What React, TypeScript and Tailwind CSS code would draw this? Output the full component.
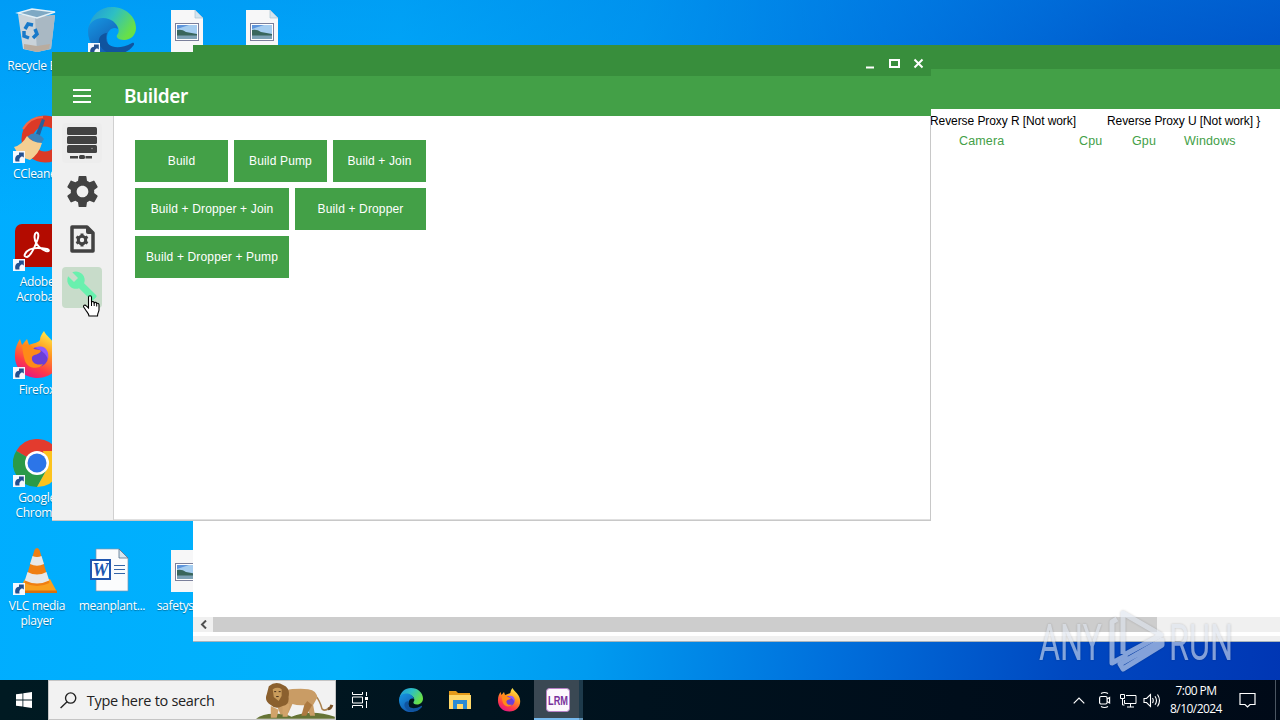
import { ReactNode } from 'react'
import { MdBuild, MdSettings } from 'react-icons/md'

interface DesktopItem {
  label: string
  icon: ReactNode
  shortcut?: boolean
}

function ShortcutArrow() {
  return (
    <g>
      <rect x="0" y="36" width="12" height="12" fill="#f4f8ff" />
      <path d="M2.500 46.500c-1-4 .5-6.500 3.500-6.700V37.500h4.800v5L9 41.200C6.500 42.500 6 44 6.500 46.500z" fill="#24508f" />
    </g>
  )
}

function RecycleBinIcon() {
  return (
    <>
      <path d="M5 7l17 3 20-2-4 34-14 3-14-3z" fill="#c9d3da" />
      <path d="M22 10l20-2-4 34-14 3z" fill="#a9b8c3" />
      <path d="M5 6l14-4 23 3-18 6z" fill="#7fa9c4" stroke="#e6f1f7" strokeWidth="1.500" />
      <path d="M11 37l13 2 13-2-1 5-12 3-13-3z" fill="#b9ac9f" />
      <g fill="none" stroke="#1879c9" strokeWidth="3.500">
        <path d="M12 22l3-5 5 1" />
        <path d="M22 22l2 5-4 4" />
        <path d="M16 31l-5-2v-5" />
      </g>
    </>
  )
}

function EdgeIcon() {
  return (
    <>
      <defs>
        <linearGradient id="edgeTop" x1="0" y1="0" x2="1" y2="0.500">
          <stop offset="0" stopColor="#1f95dc" />
          <stop offset="0.500" stopColor="#2dbfc4" />
          <stop offset="1" stopColor="#68e047" />
        </linearGradient>
        <linearGradient id="edgeSide" x1="0" y1="0" x2="0.600" y2="1">
          <stop offset="0" stopColor="#1698e4" />
          <stop offset="1" stopColor="#1358ae" />
        </linearGradient>
      </defs>
      <path d="M1 20C3 8 12 0 24 0c14 0 24 10 24 21 0 7-5 12-12 12-6 0-8-3-7-5 3-3 2-9-3-12C19 11 7 11 1 20z" fill="url(#edgeTop)" />
      <path d="M0 24c0-9 8-13 15-13 8 0 14 5 15 11-5-3-11 1-11 9 0 8 6 14 12 17C13 51 0 40 0 24z" fill="url(#edgeSide)" />
      <path d="M19 26c-5 13 9 19 25 10 2-1 3 1 1 3-7 9-20 11-28 5-9-6-8-17 2-18z" fill="#10549f" />
    </>
  )
}

function ImageFileIcon() {
  return (
    <>
      <path d="M8 3h24l8 8v34H8z" fill="#f7f7f8" />
      <path d="M32 3v8h8z" fill="#d3e4ef" stroke="#a9c3d2" strokeWidth="0.700" />
      <rect x="12.500" y="16.500" width="23" height="17" fill="#fff" stroke="#7a7f9b" />
      <rect x="14" y="18" width="20" height="14" fill="#a5cdf0" />
      <path d="M14 18h12l-12 4z" fill="#5d95dc" />
      <path d="M14 23q5-1 9 2l11 2v2H14z" fill="#39665c" />
      <path d="M14 28.500h20V32H14z" fill="#7ca1b5" />
    </>
  )
}

function CCleanerIcon() {
  return (
    <>
      <circle cx="32" cy="24" r="18" fill="none" stroke="#dc3a26" strokeWidth="11" />
      <path d="M10 14Q17 2 30 2" fill="none" stroke="#f06a4c" strokeWidth="2" />
      <path d="M29 4l3 1-6 18-4-2z" fill="#285f9a" />
      <path d="M18 19q7-2 13 5l-4 6-13-8z" fill="#3b83bd" />
      <path d="M14 21q5 7 15 7-3 11-12 17Q6 43 1 32q8-2 13-11z" fill="#f4cf93" />
    </>
  )
}

function AcrobatIcon() {
  return (
    <>
      <rect x="2" y="1" width="46" height="43" rx="7" fill="#b30b00" />
      <path
        d="M12 31c3-6 12-7 22-5 3 1 2 3-1 2-8-3-13-10-11-17 2-4 5 0 2 7-3 8-7 15-10 16-2 0-3-1-2-3z"
        fill="none"
        stroke="#fff"
        strokeWidth="2"
      />
    </>
  )
}

function FirefoxIcon() {
  return (
    <>
      <defs>
        <linearGradient id="foxBody" x1="0.800" y1="0" x2="0.300" y2="1">
          <stop offset="0" stopColor="#fff44f" />
          <stop offset="0.400" stopColor="#ff9a20" />
          <stop offset="0.750" stopColor="#ff3b47" />
          <stop offset="1" stopColor="#e31587" />
        </linearGradient>
      </defs>
      <path d="M31 0c2 5 8 8 12 15 9 16-1 32-18 32C10 47 1 36 2 23c0-6 2-10 5-15l2 6 5-6 2 6c5-2 9-2 11-5 0-4 2-6 4-9z" fill="url(#foxBody)" />
      <circle cx="25" cy="26" r="10" fill="#6b3fd6" />
      <path d="M9 15c5-3 10-1 12 3 3 1 6 0 7 2-2 4-7 3-9 6-1 6 5 9 11 7-4 6-15 5-18-3-2-6-2-10-3-15z" fill="#ff8a18" />
      <path d="M22 17c9-5 15 3 13 11-2-5-6-9-13-11z" fill="#9059ff" />
    </>
  )
}

function ChromeIcon() {
  return (
    <>
      <path d="M24 24L3.200 12A24 24 0 0 1 44.800 12z" fill="#e33b2e" />
      <path d="M3.200 12A24 24 0 0 0 24 48l10-18-10-6z" fill="#2a9a48" />
      <path d="M44.800 12A24 24 0 0 1 24 48l10-18-4-18z" fill="#fcc31e" />
      <circle cx="24" cy="24" r="12" fill="#fff" />
      <circle cx="24" cy="24" r="9.500" fill="#2c75e8" />
    </>
  )
}

function VlcIcon() {
  return (
    <>
      <path d="M12 32h25l7 13H5z" fill="#f9a01f" />
      <path d="M5 43.500h39V46H5z" fill="#d9700c" />
      <path d="M21.500 3q2.500-4 5 0l10 33q-12.500 6-25 0z" fill="#f07f12" />
      <path d="M19.500 9q4.500 2 9 0l2.500 8q-7 3.500-14 0zM14.500 25q9.500 5 19 0l2.700 8.500q-12 6-24.400 0z" fill="#e8e8e8" />
    </>
  )
}

function WordFileIcon() {
  return (
    <g transform="translate(-3 0)">
      <path d="M11 2h23l9 9v33H11z" fill="#fbfcfd" stroke="#7c93ac" strokeWidth="0.700" />
      <path d="M34 2v9h9z" fill="#d8e6ef" stroke="#56718d" strokeWidth="0.800" />
      <path d="M29 18.500h11M29 22.500h11M29 26.500h11" stroke="#3565a7" strokeWidth="1.200" />
      <rect x="5" y="12" width="21" height="21" fill="#2056b0" />
      <rect x="7" y="14" width="17" height="17" fill="#fff" />
      <text x="15.500" y="29" textAnchor="middle" fontFamily="Liberation Serif, serif" fontSize="18" fontWeight="bold" fontStyle="italic" fill="#2056b0">
        W
      </text>
    </g>
  )
}

const desktopRows: DesktopItem[][] = [
  [
    { label: 'Recycle Bin', icon: <RecycleBinIcon /> },
    { label: '', icon: <EdgeIcon />, shortcut: true },
    { label: '', icon: <ImageFileIcon /> },
    { label: '', icon: <ImageFileIcon /> }
  ],
  [{ label: 'CCleaner', icon: <CCleanerIcon />, shortcut: true }],
  [{ label: 'Adobe Acrobat', icon: <AcrobatIcon />, shortcut: true }],
  [{ label: 'Firefox', icon: <FirefoxIcon />, shortcut: true }],
  [{ label: 'Google Chrome', icon: <ChromeIcon />, shortcut: true }],
  [
    { label: 'VLC media player', icon: <VlcIcon />, shortcut: true },
    { label: 'meanplant...', icon: <WordFileIcon /> },
    { label: 'safetystar...', icon: <ImageFileIcon /> }
  ]
]

function DesktopIcons() {
  return (
    <div className="flex flex-col pt-[7px]">
      {desktopRows.map((row, i) => (
        <div key={i} className="flex h-[108px] gap-px">
          {row.map((item, j) => (
            <div key={j} className="flex w-[74px] flex-col items-center">
              <svg viewBox="0 0 48 48" className="size-12 shrink-0">
                {item.icon}
                {item.shortcut && <ShortcutArrow />}
              </svg>
              <span className="mt-[3px] px-1 text-center font-['Open_Sans',sans-serif] text-[12px] leading-[15px] tracking-[-0.3px] text-white [text-shadow:0_1px_1px_rgba(0,0,0,0.35)]">
                {item.label}
              </span>
            </div>
          ))}
        </div>
      ))}
    </div>
  )
}

function ClientWindow() {
  return (
    <div className="absolute left-[193px] top-[45px] flex h-[597px] w-[1087px] flex-col border-b border-[#a9b4bc] bg-white">
      <div className="h-6 shrink-0 bg-[#388e3c]" />
      <div className="h-10 shrink-0 bg-[#43a047]" />
      <div className="flex-1 font-['Liberation_Sans',Arial,sans-serif] text-[12px]">
        <div className="flex h-6 items-center whitespace-nowrap pl-[737px] tracking-[-0.08px] text-black">
          <span className="w-[177px]">Reverse Proxy R [Not work]</span>
          <span>Reverse Proxy U [Not work] {'}'}</span>
        </div>
        <div className="flex h-4 items-center pl-[766px] text-[12.500px] tracking-[0.15px] text-[#43a047]">
          <span className="w-[120px]">Camera</span>
          <span className="w-[53px]">Cpu</span>
          <span className="w-[52px]">Gpu</span>
          <span>Windows</span>
        </div>
      </div>
      <div className="flex h-[15px] shrink-0 bg-[#f0f0f0]">
        <div className="flex w-5 items-center justify-center pl-0.5">
          <svg viewBox="0 0 8 9" className="h-[9px] w-2">
            <path d="M6 0.500L2 4.500l4 4" fill="none" stroke="#505050" strokeWidth="2" />
          </svg>
        </div>
        <div className="w-[944px] bg-[#cdcdcd]" />
      </div>
      <div className="h-1 shrink-0 bg-white" />
      <div className="h-[5px] shrink-0 bg-[#f0f0f0]" />
    </div>
  )
}

function ServerIcon() {
  return (
    <svg viewBox="0 0 30 34" className="h-[34px] w-[30px]">
      <g fill="#424242">
        <rect x="0" y="1" width="30" height="8" rx="1.500" />
        <rect x="0" y="10" width="30" height="8" rx="1.500" />
        <rect x="0" y="19" width="30" height="8" rx="1.500" />
        <rect x="3" y="30" width="8" height="2.500" />
        <rect x="12" y="29" width="6" height="4" rx="1.500" />
        <rect x="18.500" y="30" width="6.500" height="2.500" />
      </g>
      <circle cx="25" cy="22.500" r="0.700" fill="#aaa" />
    </svg>
  )
}

function FileGearIcon() {
  return (
    <svg viewBox="0 0 25 28" className="h-7 w-[25px]">
      <path d="M2 2h15l6 6v18H2z" fill="none" stroke="#424242" strokeWidth="3.500" strokeLinejoin="round" />
      <path d="M16 1l8 8h-6q-2 0-2-2z" fill="#424242" />
      <g transform="translate(12 15)">
        <circle r="3.700" fill="none" stroke="#424242" strokeWidth="3" />
        <path d="M0-6.500v3M0 3.500v3M-5.600-3.200l2.600 1.500M3 1.700l2.600 1.500M5.600-3.200L3-1.700M-3 1.700l-2.600 1.500" stroke="#424242" strokeWidth="3" />
      </g>
    </svg>
  )
}

function BuildButton({ label, width }: { label: string; width: string }) {
  return (
    <button className={`${width} h-[42px] whitespace-nowrap bg-[#43a047] text-center text-[12px] tracking-[0.15px] text-white`}>
      {label}
    </button>
  )
}

function BuilderWindow() {
  return (
    <div className="absolute left-[52px] top-[52px] flex h-[469px] w-[879px] flex-col bg-white font-['Liberation_Sans',Arial,sans-serif]">
      <div className="flex h-6 shrink-0 items-center justify-end bg-[#388e3c] pr-1.5">
        <svg viewBox="0 0 60 12" className="h-3 w-[60px]" fill="none" stroke="#fff">
          <path d="M1 9.500h8" strokeWidth="2" />
          <rect x="25" y="2" width="9" height="7" strokeWidth="2" />
          <path d="M49.500 1.500l8 8M57.500 1.500l-8 8" strokeWidth="2" />
        </svg>
      </div>
      <div className="flex h-10 shrink-0 items-center bg-[#43a047]">
        <svg viewBox="0 0 18 14" className="ml-[21px] h-[14px] w-[18px]">
          <path d="M0 1h18M0 7h18M0 13h18" stroke="#fff" strokeWidth="2" />
        </svg>
        <h1 className="ml-[33px] font-['Noto_Sans',sans-serif] text-[19px] font-semibold leading-none tracking-[-0.4px] text-white">Builder</h1>
      </div>
      <div className="flex min-h-0 flex-1 border-b border-r border-[#c8c8c8]">
        <div className="flex w-[62px] shrink-0 flex-col items-center gap-2 border-r border-[#d0d0d0] bg-[#f0f0f0] pr-px pt-[7px]">
          <div className="flex size-10 items-center justify-center rounded bg-[#ededed]">
            <ServerIcon />
          </div>
          <div className="flex size-10 items-center justify-center">
            <MdSettings className="size-[39px] shrink-0 text-[#424242]" />
          </div>
          <div className="flex size-10 items-center justify-center">
            <FileGearIcon />
          </div>
          <div className="flex h-[41px] w-10 items-start justify-center rounded bg-[#c8dcca] pt-[3px]">
            <MdBuild className="size-8 shrink-0 text-[#69f0ae]" />
          </div>
        </div>
        <div className="flex flex-1 flex-col gap-1.5 border-b border-[#e0e0e0] pl-[21px] pt-6">
          <div className="flex gap-1.5">
            <BuildButton label="Build" width="w-[93px]" />
            <BuildButton label="Build Pump" width="w-[93px]" />
            <BuildButton label="Build + Join" width="w-[93px]" />
          </div>
          <div className="flex gap-1.5">
            <BuildButton label="Build + Dropper + Join" width="w-[154px]" />
            <BuildButton label="Build + Dropper" width="w-[131px]" />
          </div>
          <div className="flex">
            <BuildButton label="Build + Dropper + Pump" width="w-[154px]" />
          </div>
        </div>
      </div>
    </div>
  )
}

function Watermark() {
  return (
    <svg viewBox="0 0 220 80" className="absolute left-[1036px] top-[606px] h-20 w-[220px] opacity-60 drop-shadow-[0_0_1px_rgba(0,0,0,0.3)]">
      <g fill="#dde3ee" fontFamily="Roboto, sans-serif" fontSize="50">
        <text x="3" y="54" textLength="63" lengthAdjust="spacingAndGlyphs">ANY</text>
        <text x="133" y="54" textLength="64" lengthAdjust="spacingAndGlyphs">RUN</text>
      </g>
      <g fill="none" stroke="#dde3ee" strokeWidth="5" strokeLinejoin="round">
        <path d="M81 13l-5 3v41l15-8" />
        <path d="M87 48V7l38 22-37 20" />
        <path d="M84 58l42-24v5L87 63z" />
      </g>
    </svg>
  )
}

function HandCursor() {
  return (
    <svg viewBox="0 0 17 22" className="absolute left-[83px] top-[295px] h-[22px] w-[17px]">
      <path
        d="M5.500 13V2.200c0-2 3-2 3 0v5c.5-1 2.500-.8 2.700.6.700-.9 2.300-.5 2.500.7.900-.7 2.300 0 2.300 1.300v5c0 2-1.500 3-1.500 6.200h-8.500c0-2-2-4-3-5.500L.700 12c-.8-1.500 1.300-2.600 2.600-1.200z"
        fill="#fff"
        stroke="#000"
        strokeWidth="1.100"
      />
      <path d="M8.500 7v4M11.200 8v3M13.700 9v2.500" stroke="#000" />
    </svg>
  )
}

function Lion() {
  return (
    <svg viewBox="0 0 80 38" className="h-[38px] w-20">
      <path d="M0 38q8-6 22-5 9 0 14 3 20-8 44 0v2z" fill="#657335" />
      <path d="M60 14q5 6 7 14 3 3 7-1" fill="none" stroke="#a9824f" strokeWidth="1.500" />
      <path d="M73 28q3 0 4-4" fill="none" stroke="#7a5228" strokeWidth="3" />
      <path d="M28 9q14-2 25-1 9 1 9 9l-4 7 2 11h-5l-4-11q-8 1-14-1l-4 9-8 2-6-14z" fill="#c99c65" />
      <path d="M52 20l5 4-6 11h-5l3-11z" fill="#ac7940" />
      <path d="M15 25l8 4-2 8h-6zM27 23h7l-2 13h-5z" fill="#d1a36a" />
      <path d="M13 5q7-6 15-1 7 3 5 12 1 8-6 9-7 4-12-1-7-4-4-11z" fill="#8b602e" />
      <path d="M17 8q5-3 9 0v7l-3 5-5-4z" fill="#c99c5c" />
      <path d="M18.500 10.500h2M23 10.500h2M20.500 15.500h2.500" stroke="#402b18" />
    </svg>
  )
}

function FolderIcon() {
  return (
    <svg viewBox="0 0 24 24" className="size-6">
      <path d="M1 3h7l2 2h12v5H1z" fill="#e59b19" />
      <path d="M1 7h22v14H1z" fill="#ffd869" />
      <path d="M5 12h14v9h-4v-5H9v5H5z" fill="#298bd3" />
    </svg>
  )
}

function Taskbar() {
  return (
    <div className="absolute bottom-0 left-0 flex h-10 w-full bg-linear-to-r from-[#001a22] via-[#00121e] to-[#000a18] font-['Open_Sans',sans-serif] text-white">
      <div className="flex w-12 items-center justify-center">
        <svg viewBox="0 0 16 16" className="size-4" fill="#fff">
          <path d="M0 2.300l6.500-.9v6.100H0zM7.300 1.300L16 0v7.500H7.300zM0 8.400h6.500v6.200L0 13.700zM7.300 8.400H16V16l-8.700-1.200z" />
        </svg>
      </div>
      <div className="flex w-72 items-center border border-[#c5c5c5] bg-[#f2f2f2] text-[#222]">
        <svg viewBox="0 0 17 17" className="ml-[11px] size-[17px]" fill="none" stroke="#222" strokeWidth="1.400">
          <circle cx="10.800" cy="6" r="5.200" />
          <path d="M7.200 9.800L0.600 16.200" />
        </svg>
        <span className="ml-2.5 mt-px w-[172px] whitespace-nowrap text-[14.500px] tracking-[-0.3px]">Type here to search</span>
        <Lion />
      </div>
      <div className="flex w-[49px] items-center justify-center">
        <svg viewBox="0 0 17 16" className="h-4 w-[17px]" fill="none" stroke="#fff">
          <path d="M.5 0v2.500h10V0M.5 16v-2.500h10V16M.5 5h10v6H.5zM14.500 0v4M14.500 9v7" />
          <rect x="13" y="5" width="3" height="3" fill="#fff" stroke="none" />
        </svg>
      </div>
      <div className="flex w-[53px] items-center justify-center pr-0.5">
        <svg viewBox="0 0 48 48" className="size-6"><EdgeIcon /></svg>
      </div>
      <div className="flex w-[45px] items-center justify-center pr-0.5"><FolderIcon /></div>
      <div className="flex w-[51px] items-center justify-center">
        <svg viewBox="0 0 48 48" className="size-6"><FirefoxIcon /></svg>
      </div>
      <div className="flex w-[45px] items-center justify-center border-b-2 border-[#76b9ed] bg-[#3a4853] pl-0.5 pt-0.5">
        <svg viewBox="0 0 24 24" className="size-6">
          <rect x="0.500" y="0.500" width="23" height="23" rx="3" fill="#fcf8fd" stroke="#b880c8" />
          <text x="2" y="16.500" textLength="20" lengthAdjust="spacingAndGlyphs" fontFamily="Liberation Sans, Arial, sans-serif" fontSize="13" fontWeight="bold" fill="#78309b">
            LRM
          </text>
        </svg>
      </div>
      <div className="w-1 border-b-2 border-[#5e91b5] bg-[#1d3a4b]" />
      <div className="ml-auto flex items-center">
        <svg viewBox="0 0 12 7" className="h-[7px] w-3">
          <path d="M.7 6.300L6 1l5.300 5.300" fill="none" stroke="#fff" strokeWidth="1.200" />
        </svg>
        <svg viewBox="0 0 14 18" className="ml-[13px] h-[18px] w-[14px]" fill="none" stroke="#fff" strokeWidth="1.200">
          <path d="M3 2.500q3.500-2 7 0M3 15.500q3.500 2 7 0" />
          <rect x="1.600" y="5.500" width="7.500" height="7.500" rx="1.500" />
          <path d="M9.100 8l2.500-1.500v5.500L9.100 10.500" />
        </svg>
        <svg viewBox="0 0 17 15" className="ml-2 h-[15px] w-[17px]" fill="none" stroke="#fff">
          <path d="M6 2.500h10v8H4.500V7M10.500 11v3M7 14h7" />
          <path d="M.5 1.500h4v4h-4zM2.500 5.500V12h2" />
        </svg>
        <svg viewBox="0 0 18 15" className="ml-1.5 h-[15px] w-[18px]" fill="none" stroke="#fff" strokeWidth="1.100">
          <path d="M1 5.500h2.500l4-4v12l-4-4H1z" />
          <path d="M9.500 5q1.500 2.500 0 5M12 3.200q3 4.300 0 8.600M14.500 1.500q4 6 0 12" />
        </svg>
        <div className="ml-1.5 w-[58px] whitespace-nowrap text-center text-[12px] leading-[18px] tracking-[-0.55px]">
          <div>7:00 PM</div>
          <div>8/10/2024</div>
        </div>
        <svg viewBox="0 0 17 17" className="ml-3.5 size-[17px]" fill="none" stroke="#fff" strokeWidth="1.200">
          <path d="M1 1.500h15v11h-5L8.500 15 6 12.500H1z" />
        </svg>
        <div className="ml-[19px] mr-1 h-10 w-px bg-[#4b5662]" />
      </div>
    </div>
  )
}

export default function App() {
  return (
    <div className="relative h-[720px] w-[1280px] overflow-hidden bg-[linear-gradient(to_bottom,rgba(0,135,235,0.45)_0%,rgba(0,150,245,0)_30%),linear-gradient(95deg,#00adff_0%,#00b2fc_30%,#009bf0_48%,#0070dc_66%,#0048c0_84%,#0036b4_100%)]">
      <DesktopIcons />
      <ClientWindow />
      <BuilderWindow />
      <Watermark />
      <Taskbar />
      <HandCursor />
    </div>
  )
}
